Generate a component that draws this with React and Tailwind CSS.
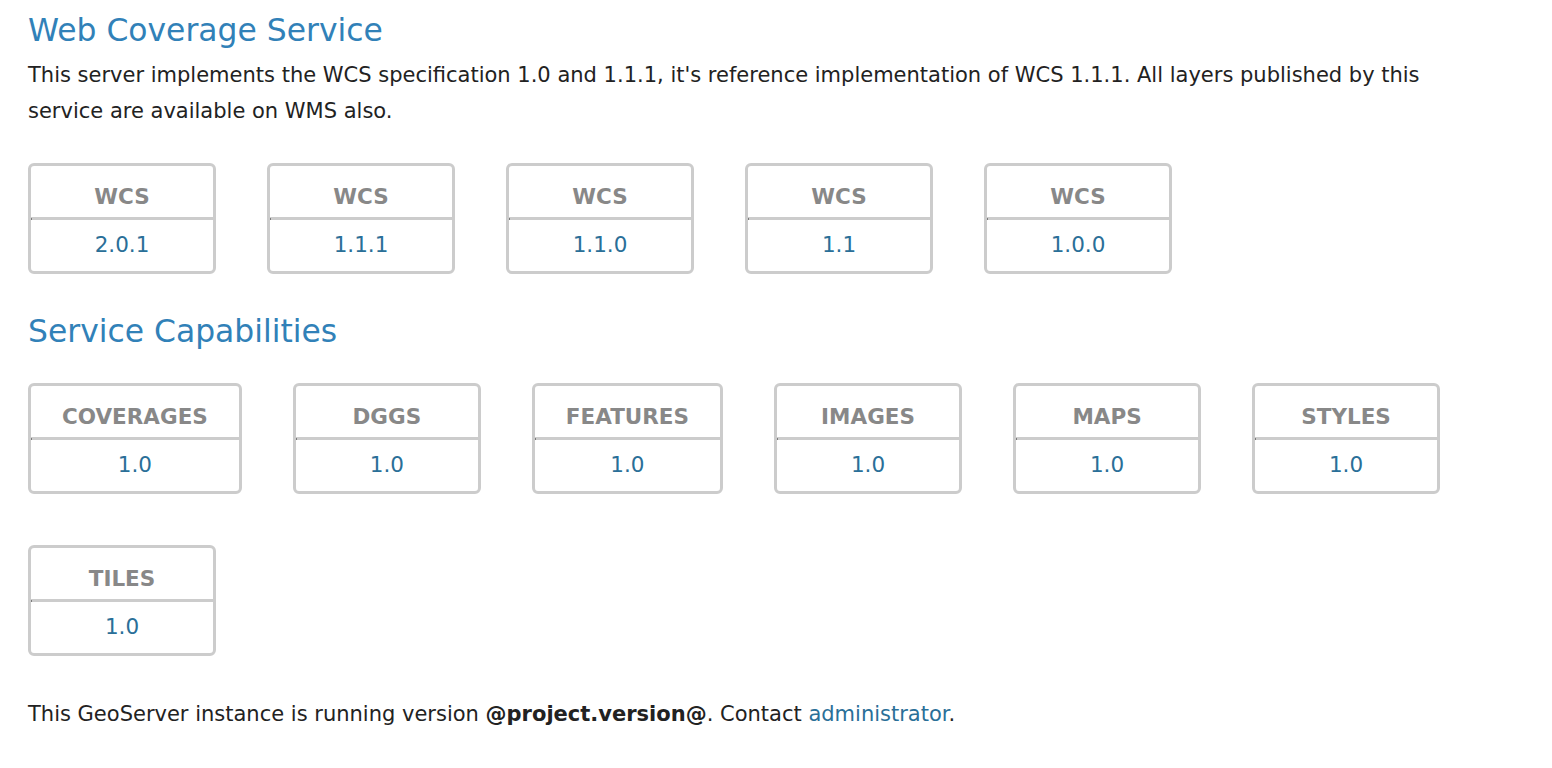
import React from "react";

const wcs = ["2.0.1", "1.1.1", "1.1.0", "1.1", "1.0.0"];
const caps = [
  ["COVERAGES", "1.0"],
  ["DGGS", "1.0"],
  ["FEATURES", "1.0"],
  ["IMAGES", "1.0"],
  ["MAPS", "1.0"],
  ["STYLES", "1.0"],
  ["TILES", "1.0"],
];

const VersionBox = ({ title, version }) => {
  return (
    <div className="min-w-[188px] border-[3px] border-[#cccccc] rounded-[6px] flex flex-col">
      <div className="h-[51px] pt-[18px] text-center px-[31px] font-bold text-[21.5px] leading-[26px] text-[#888888]">
        {title}
      </div>
      <div className="h-[3px] bg-[#cccccc] flex items-center">
        <span className="w-px h-[2px] bg-[#7a7a7a]" />
      </div>
      <a
        href="#"
        className="h-[51px] pt-[12px] text-center px-[31px] text-[21.5px] leading-[26px] text-[#2a6f98]"
      >
        {version}
      </a>
    </div>
  );
};

export default function App() {
  return (
    <div className="min-h-screen bg-white font-['DejaVu_Sans',Verdana,sans-serif] text-[#222222]">
      <div className="w-[1480px] pl-[28px] pt-[8px]">
        <h2 className="text-[31.4px] leading-[44px] text-[#3181b8]">
          Web Coverage Service
        </h2>
        <p className="mt-[5px] text-[21px] leading-[36px]">
          This server implements the WCS specification 1.0 and 1.1.1, it's
          reference implementation of WCS 1.1.1. All layers published by this
          service are available on WMS also.
        </p>

        <div className="mt-[34px] flex flex-wrap gap-[51px]">
          {wcs.map((v) => (
            <VersionBox key={v} title="WCS" version={v} />
          ))}
        </div>

        <h2 className="mt-[35px] text-[31.4px] leading-[44px] text-[#3181b8]">
          Service Capabilities
        </h2>

        <div className="mt-[30px] flex flex-wrap gap-[51px]">
          {caps.map(([t, v]) => (
            <VersionBox key={t} title={t} version={v} />
          ))}
        </div>

        <p className="mt-[40px] text-[21px] leading-[36px]">
          This GeoServer instance is running version{" "}
          <b className="font-bold">@project.version@</b>. Contact{" "}
          <a href="#" className="text-[#2a6f98]">
            administrator
          </a>
          .
        </p>
      </div>
    </div>
  );
}
